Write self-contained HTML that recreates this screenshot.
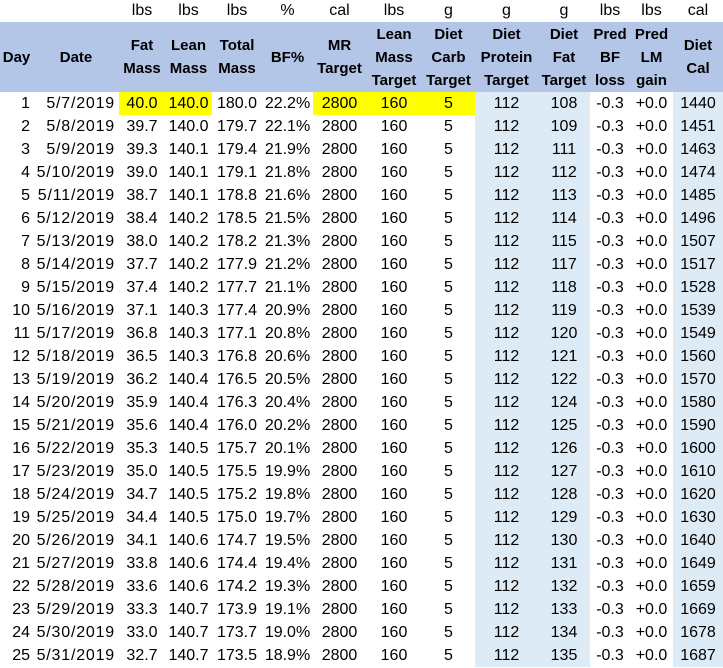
<!DOCTYPE html>
<html><head><meta charset="utf-8">
<style>
html,body{margin:0;padding:0;background:#fff;}
body{width:723px;height:668px;overflow:hidden;font-family:"Liberation Sans",Arial,sans-serif;color:#000;}
table{border-collapse:collapse;table-layout:fixed;width:723px;}
td{padding:0;text-align:center;font-size:16px;height:23px;line-height:23px;white-space:nowrap;overflow:hidden;}
tr.u td{height:22px;line-height:22px;}
tr.h td{background:#b4c6e7;font-weight:bold;font-size:15px;height:70px;line-height:23px;vertical-align:middle;}
td.d{text-align:right;padding-right:3px;}
td.dt{text-align:right;padding-right:4px;letter-spacing:0.8px;}
td:nth-child(10),td:nth-child(11),td:nth-child(14){background:#ddebf7;}
tr.u td{background:#fff !important;}
tr.h td{background:#b4c6e7 !important;}
td.y{background:#ffff00 !important;}
</style></head><body>
<table>
<colgroup>
<col style="width:33px"><col style="width:86px"><col style="width:46px"><col style="width:47px"><col style="width:50px"><col style="width:51px"><col style="width:53px"><col style="width:56px"><col style="width:53px"><col style="width:63px"><col style="width:52px"><col style="width:40px"><col style="width:43px"><col style="width:50px">
</colgroup>
<tr class="u"><td></td><td></td><td>lbs</td><td>lbs</td><td>lbs</td><td>%</td><td>cal</td><td>lbs</td><td>g</td><td>g</td><td>g</td><td>lbs</td><td>lbs</td><td>cal</td></tr>
<tr class="h"><td>Day</td><td>Date</td><td>Fat<br>Mass</td><td>Lean<br>Mass</td><td>Total<br>Mass</td><td>BF%</td><td>MR<br>Target</td><td>Lean<br>Mass<br>Target</td><td>Diet<br>Carb<br>Target</td><td>Diet<br>Protein<br>Target</td><td>Diet<br>Fat<br>Target</td><td>Pred<br>BF<br>loss</td><td>Pred<br>LM<br>gain</td><td>Diet<br>Cal</td></tr>
<tr><td class="d">1</td><td class="dt">5/7/2019</td><td class="y">40.0</td><td class="y">140.0</td><td>180.0</td><td>22.2%</td><td class="y">2800</td><td class="y">160</td><td class="y">5</td><td>112</td><td>108</td><td>-0.3</td><td>+0.0</td><td>1440</td></tr>
<tr><td class="d">2</td><td class="dt">5/8/2019</td><td>39.7</td><td>140.0</td><td>179.7</td><td>22.1%</td><td>2800</td><td>160</td><td>5</td><td>112</td><td>109</td><td>-0.3</td><td>+0.0</td><td>1451</td></tr>
<tr><td class="d">3</td><td class="dt">5/9/2019</td><td>39.3</td><td>140.1</td><td>179.4</td><td>21.9%</td><td>2800</td><td>160</td><td>5</td><td>112</td><td>111</td><td>-0.3</td><td>+0.0</td><td>1463</td></tr>
<tr><td class="d">4</td><td class="dt">5/10/2019</td><td>39.0</td><td>140.1</td><td>179.1</td><td>21.8%</td><td>2800</td><td>160</td><td>5</td><td>112</td><td>112</td><td>-0.3</td><td>+0.0</td><td>1474</td></tr>
<tr><td class="d">5</td><td class="dt">5/11/2019</td><td>38.7</td><td>140.1</td><td>178.8</td><td>21.6%</td><td>2800</td><td>160</td><td>5</td><td>112</td><td>113</td><td>-0.3</td><td>+0.0</td><td>1485</td></tr>
<tr><td class="d">6</td><td class="dt">5/12/2019</td><td>38.4</td><td>140.2</td><td>178.5</td><td>21.5%</td><td>2800</td><td>160</td><td>5</td><td>112</td><td>114</td><td>-0.3</td><td>+0.0</td><td>1496</td></tr>
<tr><td class="d">7</td><td class="dt">5/13/2019</td><td>38.0</td><td>140.2</td><td>178.2</td><td>21.3%</td><td>2800</td><td>160</td><td>5</td><td>112</td><td>115</td><td>-0.3</td><td>+0.0</td><td>1507</td></tr>
<tr><td class="d">8</td><td class="dt">5/14/2019</td><td>37.7</td><td>140.2</td><td>177.9</td><td>21.2%</td><td>2800</td><td>160</td><td>5</td><td>112</td><td>117</td><td>-0.3</td><td>+0.0</td><td>1517</td></tr>
<tr><td class="d">9</td><td class="dt">5/15/2019</td><td>37.4</td><td>140.2</td><td>177.7</td><td>21.1%</td><td>2800</td><td>160</td><td>5</td><td>112</td><td>118</td><td>-0.3</td><td>+0.0</td><td>1528</td></tr>
<tr><td class="d">10</td><td class="dt">5/16/2019</td><td>37.1</td><td>140.3</td><td>177.4</td><td>20.9%</td><td>2800</td><td>160</td><td>5</td><td>112</td><td>119</td><td>-0.3</td><td>+0.0</td><td>1539</td></tr>
<tr><td class="d">11</td><td class="dt">5/17/2019</td><td>36.8</td><td>140.3</td><td>177.1</td><td>20.8%</td><td>2800</td><td>160</td><td>5</td><td>112</td><td>120</td><td>-0.3</td><td>+0.0</td><td>1549</td></tr>
<tr><td class="d">12</td><td class="dt">5/18/2019</td><td>36.5</td><td>140.3</td><td>176.8</td><td>20.6%</td><td>2800</td><td>160</td><td>5</td><td>112</td><td>121</td><td>-0.3</td><td>+0.0</td><td>1560</td></tr>
<tr><td class="d">13</td><td class="dt">5/19/2019</td><td>36.2</td><td>140.4</td><td>176.5</td><td>20.5%</td><td>2800</td><td>160</td><td>5</td><td>112</td><td>122</td><td>-0.3</td><td>+0.0</td><td>1570</td></tr>
<tr><td class="d">14</td><td class="dt">5/20/2019</td><td>35.9</td><td>140.4</td><td>176.3</td><td>20.4%</td><td>2800</td><td>160</td><td>5</td><td>112</td><td>124</td><td>-0.3</td><td>+0.0</td><td>1580</td></tr>
<tr><td class="d">15</td><td class="dt">5/21/2019</td><td>35.6</td><td>140.4</td><td>176.0</td><td>20.2%</td><td>2800</td><td>160</td><td>5</td><td>112</td><td>125</td><td>-0.3</td><td>+0.0</td><td>1590</td></tr>
<tr><td class="d">16</td><td class="dt">5/22/2019</td><td>35.3</td><td>140.5</td><td>175.7</td><td>20.1%</td><td>2800</td><td>160</td><td>5</td><td>112</td><td>126</td><td>-0.3</td><td>+0.0</td><td>1600</td></tr>
<tr><td class="d">17</td><td class="dt">5/23/2019</td><td>35.0</td><td>140.5</td><td>175.5</td><td>19.9%</td><td>2800</td><td>160</td><td>5</td><td>112</td><td>127</td><td>-0.3</td><td>+0.0</td><td>1610</td></tr>
<tr><td class="d">18</td><td class="dt">5/24/2019</td><td>34.7</td><td>140.5</td><td>175.2</td><td>19.8%</td><td>2800</td><td>160</td><td>5</td><td>112</td><td>128</td><td>-0.3</td><td>+0.0</td><td>1620</td></tr>
<tr><td class="d">19</td><td class="dt">5/25/2019</td><td>34.4</td><td>140.5</td><td>175.0</td><td>19.7%</td><td>2800</td><td>160</td><td>5</td><td>112</td><td>129</td><td>-0.3</td><td>+0.0</td><td>1630</td></tr>
<tr><td class="d">20</td><td class="dt">5/26/2019</td><td>34.1</td><td>140.6</td><td>174.7</td><td>19.5%</td><td>2800</td><td>160</td><td>5</td><td>112</td><td>130</td><td>-0.3</td><td>+0.0</td><td>1640</td></tr>
<tr><td class="d">21</td><td class="dt">5/27/2019</td><td>33.8</td><td>140.6</td><td>174.4</td><td>19.4%</td><td>2800</td><td>160</td><td>5</td><td>112</td><td>131</td><td>-0.3</td><td>+0.0</td><td>1649</td></tr>
<tr><td class="d">22</td><td class="dt">5/28/2019</td><td>33.6</td><td>140.6</td><td>174.2</td><td>19.3%</td><td>2800</td><td>160</td><td>5</td><td>112</td><td>132</td><td>-0.3</td><td>+0.0</td><td>1659</td></tr>
<tr><td class="d">23</td><td class="dt">5/29/2019</td><td>33.3</td><td>140.7</td><td>173.9</td><td>19.1%</td><td>2800</td><td>160</td><td>5</td><td>112</td><td>133</td><td>-0.3</td><td>+0.0</td><td>1669</td></tr>
<tr><td class="d">24</td><td class="dt">5/30/2019</td><td>33.0</td><td>140.7</td><td>173.7</td><td>19.0%</td><td>2800</td><td>160</td><td>5</td><td>112</td><td>134</td><td>-0.3</td><td>+0.0</td><td>1678</td></tr>
<tr><td class="d">25</td><td class="dt">5/31/2019</td><td>32.7</td><td>140.7</td><td>173.5</td><td>18.9%</td><td>2800</td><td>160</td><td>5</td><td>112</td><td>135</td><td>-0.3</td><td>+0.0</td><td>1687</td></tr>
</table>
</body></html>
